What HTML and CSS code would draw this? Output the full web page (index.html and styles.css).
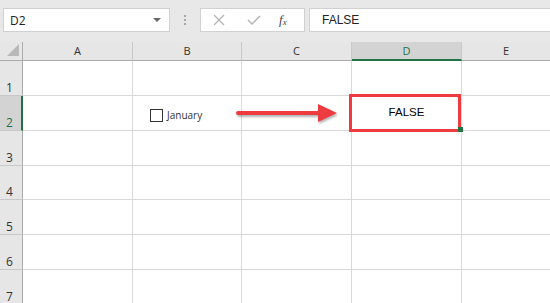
FILE: index.html
```html
<!DOCTYPE html>
<html lang="en">
<head>
    <meta charset="UTF-8">
    <title>Checkbox value</title>
    <link rel="stylesheet" href="styles.css">
</head>
<body>
    <div class="toolbar">
        <div class="namebox">
            <span>D2</span>
            <span class="caret"></span>
        </div>
        <div class="grip"><i></i><i></i><i></i></div>
        <div class="fnbox">
            <svg width="12" height="12" viewBox="0 0 12 12"><path d="M1 1 L11 11 M11 1 L1 11" stroke="#b4b4b4" stroke-width="1.3" fill="none"/></svg>
            <svg width="14" height="12" viewBox="0 0 14 12"><path d="M1 6 L5 10 L13 2" stroke="#b4b4b4" stroke-width="1.5" fill="none"/></svg>
            <span class="fx">f<sub>x</sub></span>
        </div>
        <div class="formula">FALSE</div>
    </div>

    <div class="sheet">
        <div class="corner"><span class="tri"></span></div>
        <div class="colhead">A</div>
        <div class="colhead">B</div>
        <div class="colhead">C</div>
        <div class="colhead active">D</div>
        <div class="colhead last">E</div>

        <div class="rowhead">1</div>
        <div class="cell"></div><div class="cell"></div><div class="cell"></div><div class="cell"></div><div class="cell last"></div>

        <div class="rowhead active">2</div>
        <div class="cell"></div>
        <div class="cell"><label class="check"><span class="box"></span>January</label></div>
        <div class="cell"></div>
        <div class="cell value">FALSE</div>
        <div class="cell last"></div>

        <div class="rowhead">3</div>
        <div class="cell"></div><div class="cell"></div><div class="cell"></div><div class="cell"></div><div class="cell last"></div>
        <div class="rowhead">4</div>
        <div class="cell"></div><div class="cell"></div><div class="cell"></div><div class="cell"></div><div class="cell last"></div>
        <div class="rowhead">5</div>
        <div class="cell"></div><div class="cell"></div><div class="cell"></div><div class="cell"></div><div class="cell last"></div>
        <div class="rowhead">6</div>
        <div class="cell"></div><div class="cell"></div><div class="cell"></div><div class="cell"></div><div class="cell last"></div>
        <div class="rowhead">7</div>
        <div class="cell"></div><div class="cell"></div><div class="cell"></div><div class="cell"></div><div class="cell last"></div>
    </div>

    <!-- annotation on top of the sheet -->
    <svg class="arrow" width="110" height="24" viewBox="0 0 110 24">
        <path d="M3 10 L86 10" stroke="#ee3b40" stroke-width="4" stroke-linecap="round"/>
        <polygon points="83,1 102,10 83,19" fill="#ee3b40"/>
    </svg>
    <div class="redbox"></div>
    <div class="handle"></div>
</body>
</html>
```

FILE: styles.css
```css
body {
    margin: 0;
    width: 550px;
    height: 303px;
    overflow: hidden;
    position: relative;
    background: #fff;
    font-family: "Open Sans", "Noto Sans", sans-serif;
    color: #333;
}

.toolbar {
    height: 42px;
    background: #e8e8e8;
    display: flex;
    align-items: flex-start;
    padding-top: 8px;
    box-sizing: border-box;
}

.namebox {
    margin-left: 3px;
    width: 167px;
    height: 24px;
    box-sizing: border-box;
    background: #fff;
    border: 1px solid #d0d0d0;
    display: flex;
    align-items: center;
    justify-content: space-between;
    padding: 0 8px 0 6px;
    font-size: 12px;
    color: #222;
}

.caret {
    width: 0;
    height: 0;
    border-left: 4px solid transparent;
    border-right: 4px solid transparent;
    border-top: 4px solid #666;
}

.grip {
    width: 30px;
    height: 24px;
    display: flex;
    flex-direction: column;
    align-items: center;
    justify-content: center;
    gap: 2px;
}

.grip i {
    width: 2px;
    height: 2px;
    background: #a8a8a8;
}

.fnbox {
    width: 105px;
    height: 24px;
    box-sizing: border-box;
    background: #fff;
    border: 1px solid #d0d0d0;
    display: flex;
    align-items: center;
    padding-left: 12px;
    gap: 22px;
}

.fx {
    font-family: "Liberation Serif", serif;
    font-style: italic;
    font-size: 13px;
    color: #444;
    margin-left: -4px;
}

.fx sub {
    font-size: 9px;
    vertical-align: -1px;
}

.formula {
    margin-left: 4px;
    flex: 1;
    height: 24px;
    box-sizing: border-box;
    background: #fff;
    border: 1px solid #d0d0d0;
    border-right: none;
    padding-left: 12px;
    font-family: "Liberation Sans", Arial, sans-serif;
    font-size: 12px;
    line-height: 22px;
    color: #222;
}

.sheet {
    display: grid;
    grid-template-columns: 23px 110px 109px 110px 110px 1fr;
    grid-template-rows: 19px 35px 35px 35px 34px 35px 35px 35px;
}

.sheet > div {
    box-sizing: border-box;
}

.corner {
    background: #e6e6e6;
    border-right: 1px solid #ababab;
    border-bottom: 1px solid #ababab;
    position: relative;
}

.tri {
    position: absolute;
    left: 7px;
    top: 2px;
    width: 0;
    height: 0;
    border-left: 12px solid transparent;
    border-bottom: 12px solid #b8b8b8;
}

.colhead {
    background: #e6e6e6;
    border-right: 1px solid #c8c8c8;
    border-bottom: 1px solid #ababab;
    text-align: center;
    font-size: 11px;
    line-height: 18px;
    color: #333;
}

.colhead.active {
    background: #d3d3d3;
    border-bottom: 2px solid #217346;
    color: #217346;
}

.colhead.last,
.cell.last {
    border-right: none;
}

.rowhead {
    background: #e6e6e6;
    border-right: 1px solid #ababab;
    border-bottom: 1px solid #c8c8c8;
    font-size: 12px;
    padding-left: 6px;
    display: flex;
    align-items: flex-end;
    line-height: 15px;
    color: #333;
}

.rowhead.active {
    background: #d3d3d3;
    border-right: 2px solid #217346;
    color: #217346;
}

.cell {
    border-right: 1px solid #d9d9d9;
    border-bottom: 1px solid #d9d9d9;
}

.check {
    display: flex;
    align-items: center;
    gap: 4px;
    padding: 12px 0 0 17px;
    font-size: 10px;
    color: #333;
}

.check .box {
    width: 13px;
    height: 13px;
    box-sizing: border-box;
    border: 1px solid #333;
    background: #fff;
}

.value {
    font-family: "Liberation Sans", Arial, sans-serif;
    font-size: 11.5px;
    color: #000;
    display: flex;
    align-items: center;
    justify-content: center;
    padding-bottom: 2px;
}

.arrow {
    position: absolute;
    left: 235px;
    top: 103px;
    filter: drop-shadow(1px 2px 1px rgba(0, 0, 0, 0.3));
}

.redbox {
    position: absolute;
    left: 349px;
    top: 94px;
    width: 112px;
    height: 38px;
    box-sizing: border-box;
    border: 3px solid #ee3b40;
}

.handle {
    position: absolute;
    left: 458px;
    top: 127px;
    width: 5px;
    height: 5px;
    background: #217346;
}
```
